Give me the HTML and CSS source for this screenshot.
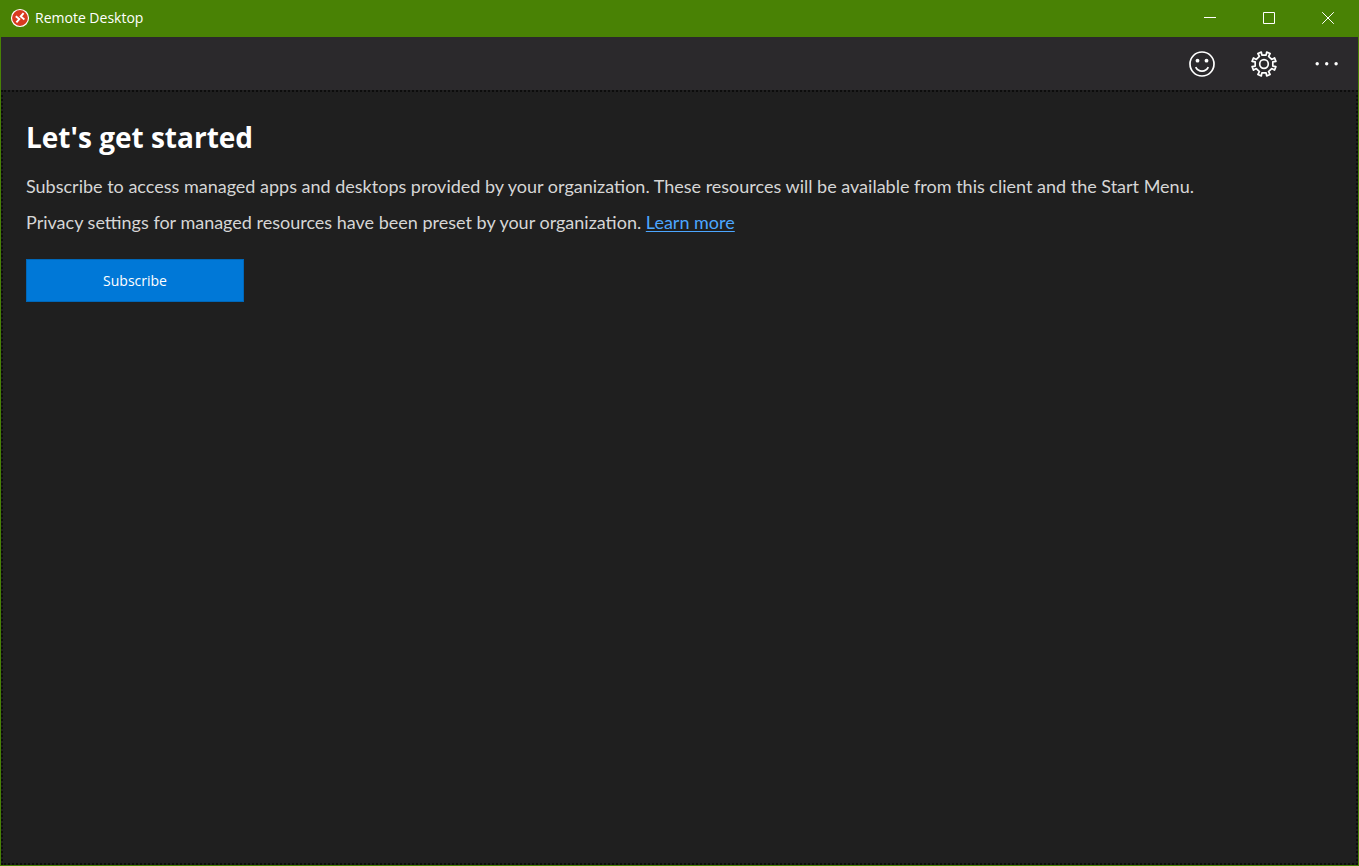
FILE: index.html
```html
<!DOCTYPE html>
<html lang="en">
<head>
<meta charset="utf-8">
<meta name="viewport" content="width=device-width, initial-scale=1">
<title>Remote Desktop</title>
<link rel="stylesheet" href="styles.css">
</head>
<body>
<div class="window">
  <header class="titlebar">
    <svg class="logo" viewBox="0 0 20 20" aria-hidden="true">
      <circle cx="10" cy="10" r="8.5" fill="#d83b20" stroke="#fff" stroke-width="1.2"/>
      <path d="M5.8 8.2 9.3 11.1 6.4 14.4M13.6 5.2 10.7 8.5 14.4 11.5" fill="none" stroke="#fff" stroke-width="1.9"/>
    </svg>
    <span class="title">Remote Desktop</span>
    <div class="caption">
      <button class="caption-button" type="button" aria-label="Minimize">
        <svg viewBox="0 0 12 12"><path d="M0 5.5H12"/></svg>
      </button>
      <button class="caption-button" type="button" aria-label="Maximize">
        <svg viewBox="0 0 12 12"><path d="M.5.5H11.5V11.5H.5Z"/></svg>
      </button>
      <button class="caption-button" type="button" aria-label="Close">
        <svg viewBox="0 0 12 12"><path d="M.2.2 11.8 11.8M11.8.2.2 11.8"/></svg>
      </button>
    </div>
  </header>
  <nav class="toolbar" aria-label="Commands">
    <button class="tool" type="button" aria-label="Feedback">
      <svg viewBox="0 0 26 26">
        <circle cx="13" cy="13" r="12"/>
        <path d="M6.7 16.2a7 7 0 0 0 12.6 0"/>
        <circle class="solid" cx="8.5" cy="9.7" r="1.9"/>
        <circle class="solid" cx="17.5" cy="9.7" r="1.9"/>
      </svg>
    </button>
    <button class="tool" type="button" aria-label="Settings">
      <svg viewBox="0 0 26 26">
        <circle cx="13" cy="13" r="4.3"/>
        <path d="M10.9 4.2 10.3 1.1 6.9 2.5 8.4 5.3 5.3 8.4 2.5 6.9 1.1 10.3 4.2 10.9V15.1L1.1 15.7 2.5 19.1 5.3 17.6 8.4 20.7 6.9 23.5 10.3 24.9 10.9 21.8H15.1L15.7 24.9 19.1 23.5 17.6 20.7 20.7 17.6 23.5 19.1 24.9 15.7 21.8 15.1V10.9L24.9 10.3 23.5 6.9 20.7 8.4 17.6 5.3 19.1 2.5 15.7 1.1 15.1 4.2Z"/>
      </svg>
    </button>
    <button class="tool" type="button" aria-label="More options">
      <svg viewBox="0 0 26 26">
        <circle class="solid" cx="4.2" cy="12.8" r="1.7"/>
        <circle class="solid" cx="13.7" cy="12.8" r="1.7"/>
        <circle class="solid" cx="23.1" cy="12.8" r="1.7"/>
      </svg>
    </button>
  </nav>
  <main class="content">
    <h1 class="heading">Let's get started</h1>
    <p class="text">Subscribe to access managed apps and desktops provided by your organization. These resources will be available from this client and the Start Menu.</p>
    <p class="text">Privacy settings for managed resources have been preset by your organization. <a class="link" href="#learn-more">Learn more</a></p>
    <button class="subscribe" type="button">Subscribe</button>
  </main>
</div>
</body>
</html>
```
FILE: styles.css
```css
* {
  box-sizing: border-box;
}

body {
  margin: 0;
  background: #1f1f1f;
  font-family: "Segoe UI", "Open Sans", "Noto Sans", sans-serif;
}

button {
  margin: 0;
  padding: 0;
  border: 0;
  background: none;
  color: #fff;
  font: inherit;
}

.window {
  display: flex;
  flex-direction: column;
  min-height: 100vh;
  border: 1px solid #498205;
  border-top: 0;
}

.titlebar {
  display: flex;
  align-items: center;
  height: 37px;
  padding: 0 1px 1px 9px;
  background: #498205;
  color: #fff;
}

.logo {
  width: 20px;
  height: 20px;
  margin-right: 5px;
}

.title {
  font-size: 14px;
  line-height: 20px;
}

.caption {
  display: flex;
  align-self: stretch;
  margin-left: auto;
}

.caption-button {
  display: grid;
  place-items: center;
  width: 59px;
}

.caption-button svg {
  width: 12px;
  height: 12px;
  fill: none;
  stroke: #fff;
}

.toolbar {
  display: flex;
  justify-content: flex-end;
  height: 53px;
  padding-right: 1px;
  background: #2b292c;
}

.tool {
  display: grid;
  place-items: center;
  width: 62px;
}

.tool svg {
  width: 26px;
  height: 26px;
  fill: none;
  stroke: #fff;
  stroke-width: 1.7;
  stroke-linejoin: round;
}

.tool .solid {
  fill: #fff;
  stroke: none;
}

.content {
  flex: 1;
  padding: 24px 23px;
  border: 2px dotted #0c0c0c;
}

.heading {
  margin: 0 0 15px;
  color: #fff;
  font-size: 28px;
  line-height: 42px;
}

.text {
  margin: 0 0 10px;
  color: #d6d6d6;
  font-family: "Segoe UI", Lato, sans-serif;
  font-size: 18px;
  line-height: 26px;
}

.link {
  color: #4ca6ff;
  text-decoration-thickness: 1px;
  text-underline-offset: 2px;
}

.subscribe {
  width: 218px;
  height: 43px;
  margin-top: 14px;
  border: 1px solid #0067b8;
  background: #0078d7;
  font-size: 14px;
}
```
